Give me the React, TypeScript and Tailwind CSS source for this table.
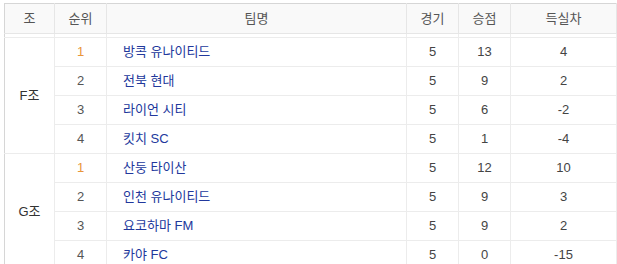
import React from "react";

type Row = { rank: number; team: string; p: number; pts: number; gd: number };

const groups: { name: string; rows: Row[] }[] = [
  {
    name: "F조",
    rows: [
      { rank: 1, team: "방콕 유나이티드", p: 5, pts: 13, gd: 4 },
      { rank: 2, team: "전북 현대", p: 5, pts: 9, gd: 2 },
      { rank: 3, team: "라이언 시티", p: 5, pts: 6, gd: -2 },
      { rank: 4, team: "킷치 SC", p: 5, pts: 1, gd: -4 },
    ],
  },
  {
    name: "G조",
    rows: [
      { rank: 1, team: "산둥 타이산", p: 5, pts: 12, gd: 10 },
      { rank: 2, team: "인천 유나이티드", p: 5, pts: 9, gd: 3 },
      { rank: 3, team: "요코하마 FM", p: 5, pts: 9, gd: 2 },
      { rank: 4, team: "카야 FC", p: 5, pts: 0, gd: -15 },
    ],
  },
];

export default function App() {
  return (
    <div
      className="w-[617px] h-[264px] overflow-hidden bg-white pt-[3px] pl-[4px]"
      style={{ fontFamily: "'Liberation Sans', 'Noto Sans CJK KR', sans-serif" }}
    >
      <table className="w-[612px] border-collapse table-fixed text-[13px] border-t border-l border-[#d6d6d6]">
        <colgroup>
          <col className="w-[50px]" />
          <col className="w-[52px]" />
          <col className="w-[300px]" />
          <col className="w-[52px]" />
          <col className="w-[52px]" />
          <col className="w-[106px]" />
        </colgroup>
        <thead>
          <tr className="h-[30px] bg-[#f9f9f9] text-[#555]">
            {["조", "순위", "팀명", "경기", "승점", "득실차"].map((h) => (
              <th
                key={h}
                className="font-normal text-center border-b border-r border-[#e6e6e6] p-0"
              >
                {h}
              </th>
            ))}
          </tr>
          <tr className="h-[4px]">
            {[0, 1, 2, 3, 4, 5].map((i) => (
              <td key={i} className="border-b border-r border-[#ececec] p-0" />
            ))}
          </tr>
        </thead>
        <tbody>
          {groups.map((g) =>
            g.rows.map((r, i) => (
              <tr key={g.name + r.rank} className="h-[29px]">
                {i === 0 && (
                  <td
                    rowSpan={4}
                    className="text-center text-[#333] border-b border-r border-[#ececec] p-0"
                  >
                    {g.name}
                  </td>
                )}
                <td
                  className={`text-center border-b border-r border-[#ececec] p-0 ${
                    r.rank === 1 ? "text-[#e8963a]" : "text-[#555]"
                  }`}
                >
                  {r.rank}
                </td>
                <td className="pl-[16px] text-[#22389c] border-b border-r border-[#ececec] p-0">
                  {r.team}
                </td>
                <td className="text-center text-[#444] border-b border-r border-[#ececec] p-0">
                  {r.p}
                </td>
                <td className="text-center text-[#444] border-b border-r border-[#ececec] p-0">
                  {r.pts}
                </td>
                <td className="text-center text-[#444] border-b border-r border-[#ececec] p-0">
                  {r.gd}
                </td>
              </tr>
            ))
          )}
        </tbody>
      </table>
    </div>
  );
}
